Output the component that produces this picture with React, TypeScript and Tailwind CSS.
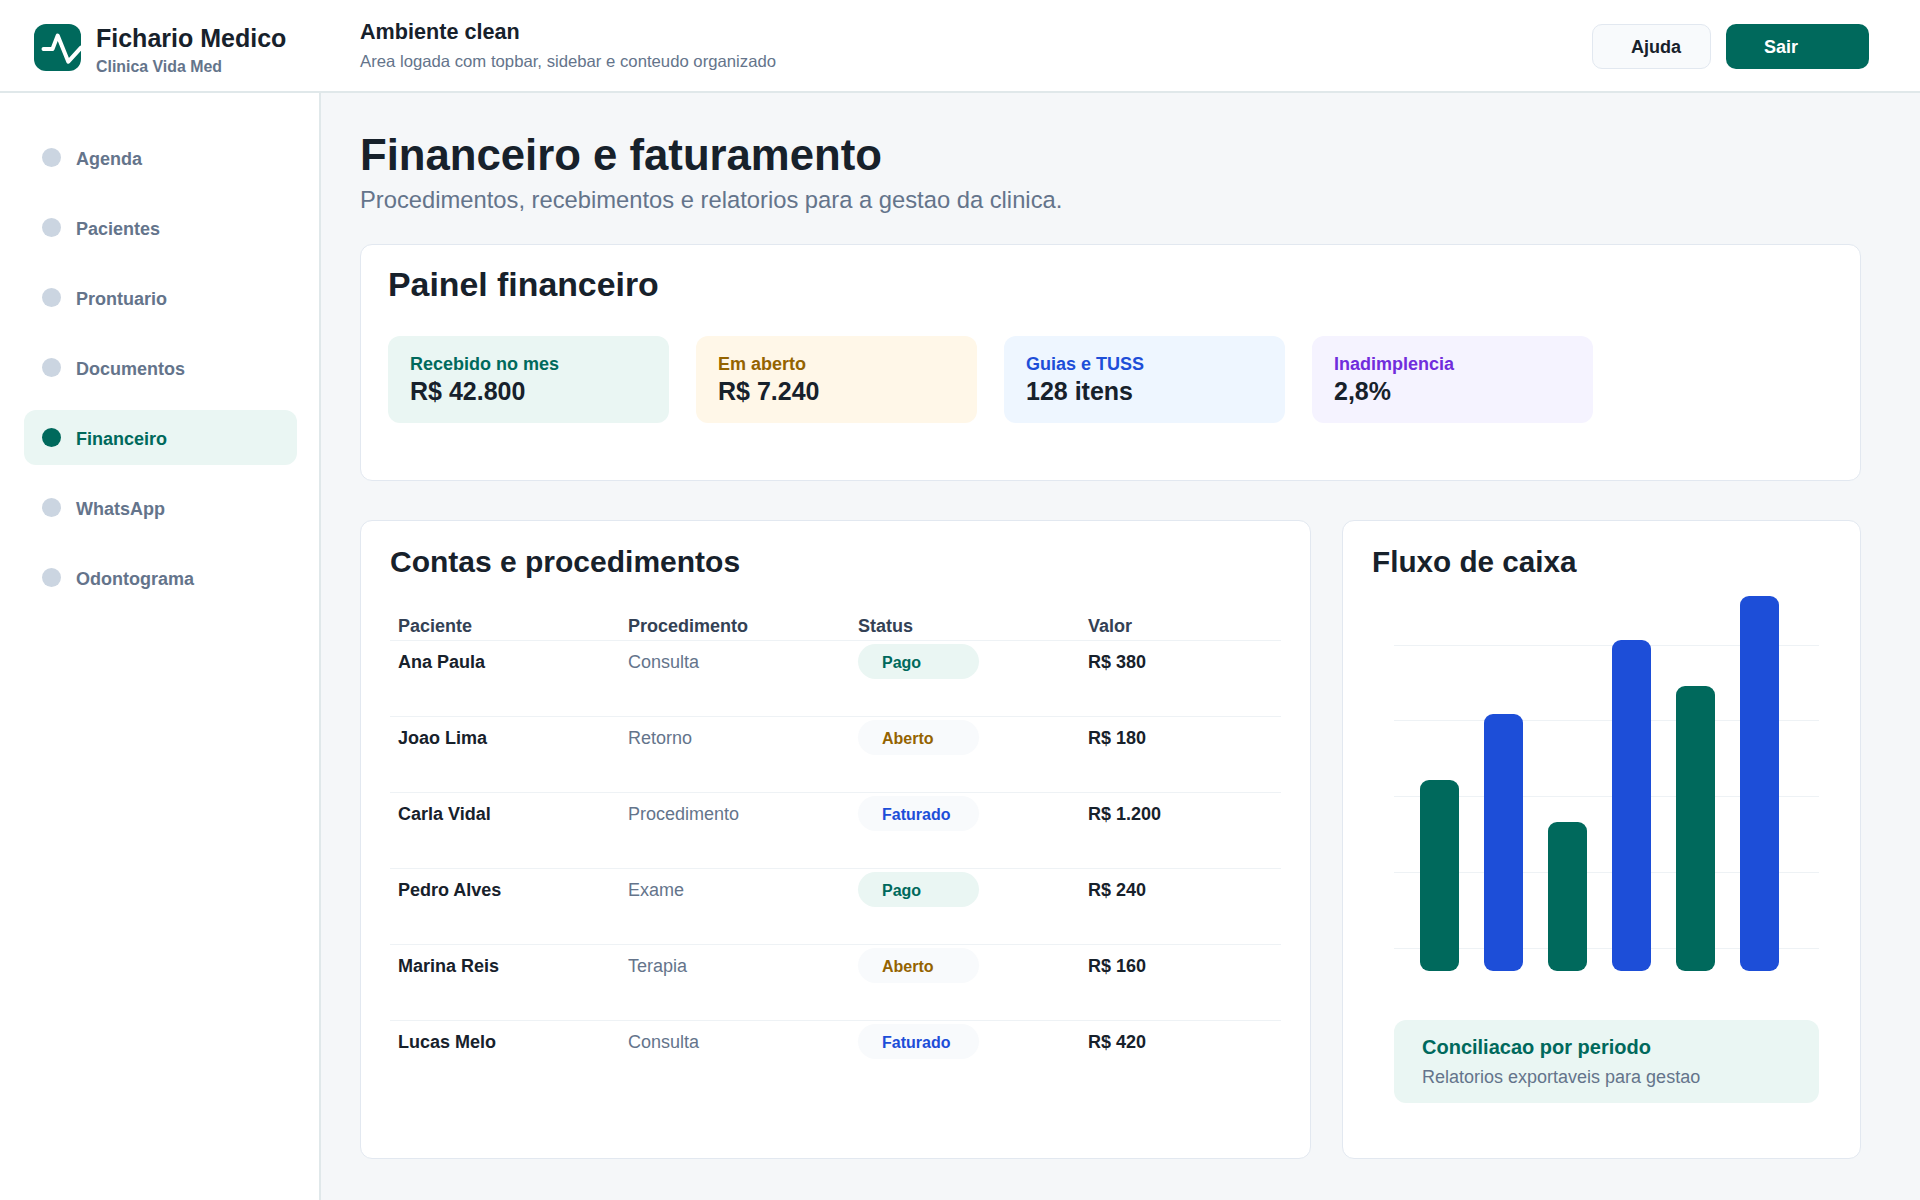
const FONT = "font-['Liberation_Sans',Arial,sans-serif]"

const navItems = [
  { label: "Agenda" },
  { label: "Pacientes" },
  { label: "Prontuario" },
  { label: "Documentos" },
  { label: "Financeiro", active: true },
  { label: "WhatsApp" },
  { label: "Odontograma" },
]

const stats = [
  { label: "Recebido no mes", value: "R$ 42.800", box: "bg-[#eaf6f3]", text: "text-[#00695c]" },
  { label: "Em aberto", value: "R$ 7.240", box: "bg-[#fff7e8]", text: "text-[#946300]" },
  { label: "Guias e TUSS", value: "128 itens", box: "bg-[#eef6ff]", text: "text-[#1d4ed8]" },
  { label: "Inadimplencia", value: "2,8%", box: "bg-[#f5f3ff]", text: "text-[#702ddc]" },
]

const statusStyle: Record<string, string> = {
  Pago: "bg-[#eaf6f3] text-[#00695c]",
  Aberto: "bg-[#f8fafc] text-[#946300]",
  Faturado: "bg-[#f8fafc] text-[#1d4ed8]",
}

const rows = [
  { name: "Ana Paula", proc: "Consulta", status: "Pago", value: "R$ 380" },
  { name: "Joao Lima", proc: "Retorno", status: "Aberto", value: "R$ 180" },
  { name: "Carla Vidal", proc: "Procedimento", status: "Faturado", value: "R$ 1.200" },
  { name: "Pedro Alves", proc: "Exame", status: "Pago", value: "R$ 240" },
  { name: "Marina Reis", proc: "Terapia", status: "Aberto", value: "R$ 160" },
  { name: "Lucas Melo", proc: "Consulta", status: "Faturado", value: "R$ 420" },
]

const bars = [
  { x: 26, top: 184, color: "#00695c" },
  { x: 90, top: 118, color: "#1d4ed8" },
  { x: 154, top: 226, color: "#00695c" },
  { x: 218, top: 44, color: "#1d4ed8" },
  { x: 282, top: 90, color: "#00695c" },
  { x: 346, top: 0, color: "#1d4ed8" },
]

function CashChart() {
  return (
    <svg width="425" height="375" viewBox="0 0 425 375" className="block">
      {[49, 124, 200, 276, 352].map((y) => (
        <line key={y} x1="0" x2="425" y1={y + 0.5} y2={y + 0.5} stroke="#eef2f5" />
      ))}
      {bars.map((bar) => (
        <rect key={bar.x} x={bar.x} y={bar.top} width="39" height={375 - bar.top} rx="9" fill={bar.color} />
      ))}
    </svg>
  )
}

export default function App() {
  return (
    <div className={`${FONT} min-h-[1200px] bg-[#f5f7f9] text-[#17212b]`}>
      {/* Topbar */}
      <header className="flex h-[93px] items-center border-b-2 border-[#e0e8ea] bg-white pt-[3px]">
        <div className="flex w-[360px] shrink-0 items-center gap-[15px] pl-[34px]">
          <div className="h-[47px] w-[47px] overflow-hidden rounded-[12px] bg-[#00695c]">
            <svg width="47" height="47" viewBox="0 0 47 47" fill="none">
              <path
                d="M9.5 25H18.5L23.7 11.5L34.3 37.7L47 23.7"
                stroke="white"
                strokeWidth="4"
                strokeLinecap="round"
                strokeLinejoin="round"
              />
            </svg>
          </div>
          <div className="pt-[5px]">
            <div className="text-[25px] leading-[30px] font-bold">Fichario Medico</div>
            <div className="mt-[4px] text-[15.9px] leading-[20px] font-bold text-[#64748b]">Clinica Vida Med</div>
          </div>
        </div>
        <div className="flex-1 pb-[5px]">
          <div className="text-[21.6px] leading-[28px] font-bold">Ambiente clean</div>
          <div className="mt-[6px] text-[16.72px] leading-[20px] text-[#64748b]">
            Area logada com topbar, sidebar e conteudo organizado
          </div>
        </div>
        <div className="mr-[51px] mb-[2px] flex gap-[15px]">
          <button className="h-[45px] w-[119px] rounded-[10px] border border-[#e2e8f0] bg-[#f8fafc] pt-[3px] pl-[38px] text-left text-[18px] font-bold">
            Ajuda
          </button>
          <button className="h-[45px] w-[143px] rounded-[10px] bg-[#00695c] pt-[3px] pl-[38px] text-left text-[18px] font-bold text-white">
            Sair
          </button>
        </div>
      </header>

      <div className="flex">
        {/* Sidebar */}
        <aside className="min-h-[1107px] w-[321px] shrink-0 border-r-2 border-[#e0e8ea] bg-white pt-[37px] pl-[24px]">
          <nav className="flex w-[273px] flex-col gap-[15px]">
            {navItems.map((item) => (
              <div
                key={item.label}
                className={`flex h-[55px] items-center gap-[15px] rounded-[12px] pl-[18px] text-[18px] font-bold ${
                  item.active ? "bg-[#eaf6f3] text-[#00695c]" : "text-[#64748b]"
                }`}
              >
                <span className={`h-[19px] w-[19px] rounded-full ${item.active ? "bg-[#00695c]" : "bg-[#cbd5e1]"}`} />
                <span className="pt-[3px]">{item.label}</span>
              </div>
            ))}
          </nav>
        </aside>

        {/* Main */}
        <main className="w-[1540px] pt-[37px] pl-[39px]">
          <h1 className="text-[43.7px] leading-[50px] font-bold">Financeiro e faturamento</h1>
          <p className="mt-[5px] text-[23.75px] leading-[30px] text-[#64748b]">
            Procedimentos, recebimentos e relatorios para a gestao da clinica.
          </p>

          <section className="mt-[29px] h-[237px] w-[1501px] rounded-[12px] border border-[#e2e8f0] bg-white pt-[19px] pl-[27px]">
            <h2 className="text-[33.85px] leading-[40px] font-bold">Painel financeiro</h2>
            <div className="mt-[32px] flex gap-[27px]">
              {stats.map((stat) => (
                <div key={stat.label} className={`h-[87px] w-[281px] rounded-[12px] pt-[17px] pl-[22px] ${stat.box}`}>
                  <div className={`text-[18px] leading-[22px] font-bold ${stat.text}`}>{stat.label}</div>
                  <div className="mt-[2px] text-[25px] leading-[29px] font-bold">{stat.value}</div>
                </div>
              ))}
            </div>
          </section>

          <div className="mt-[39px] grid w-[1501px] grid-cols-[951px_519px] gap-[31px]">
            <section className="h-[639px] rounded-[12px] border border-[#e2e8f0] bg-white pt-[23px] pl-[29px]">
              <h2 className="text-[30px] leading-[36px] font-bold">Contas e procedimentos</h2>
              <div className="mt-[35px] w-[891px]">
                <div className="grid h-[26px] grid-cols-[230px_230px_230px_1fr] border-b border-[#eef2f5] pl-[8px] text-[18px] leading-[22px] font-bold text-[#334155]">
                  <div>Paciente</div>
                  <div>Procedimento</div>
                  <div>Status</div>
                  <div>Valor</div>
                </div>
                {rows.map((row) => (
                  <div
                    key={row.name}
                    className="grid h-[76px] grid-cols-[230px_230px_230px_1fr] border-b border-[#eef2f5] pt-[3px] pl-[8px] text-[18px] last:border-b-0"
                  >
                    <div className="pt-[7px] leading-[22px] font-bold">{row.name}</div>
                    <div className="pt-[7px] leading-[22px] text-[#64748b]">{row.proc}</div>
                    <div>
                      <span
                        className={`block h-[35px] w-[121px] rounded-full pl-[24px] text-[16px] leading-[37px] font-bold ${statusStyle[row.status]}`}
                      >
                        {row.status}
                      </span>
                    </div>
                    <div className="pt-[7px] leading-[22px] font-bold">{row.value}</div>
                  </div>
                ))}
              </div>
            </section>

            <section className="h-[639px] rounded-[12px] border border-[#e2e8f0] bg-white pt-[23px] pl-[29px]">
              <h2 className="text-[29.7px] leading-[36px] font-bold">Fluxo de caixa</h2>
              <div className="mt-[16px] ml-[22px]">
                <CashChart />
                <div className="mt-[49px] h-[83px] w-[425px] rounded-[12px] bg-[#eaf6f3] pt-[14px] pl-[28px]">
                  <div className="text-[20px] leading-[26px] font-bold text-[#00695c]">Conciliacao por periodo</div>
                  <div className="mt-[6px] text-[18px] leading-[22px] text-[#64748b]">Relatorios exportaveis para gestao</div>
                </div>
              </div>
            </section>
          </div>
        </main>
      </div>
    </div>
  )
}
